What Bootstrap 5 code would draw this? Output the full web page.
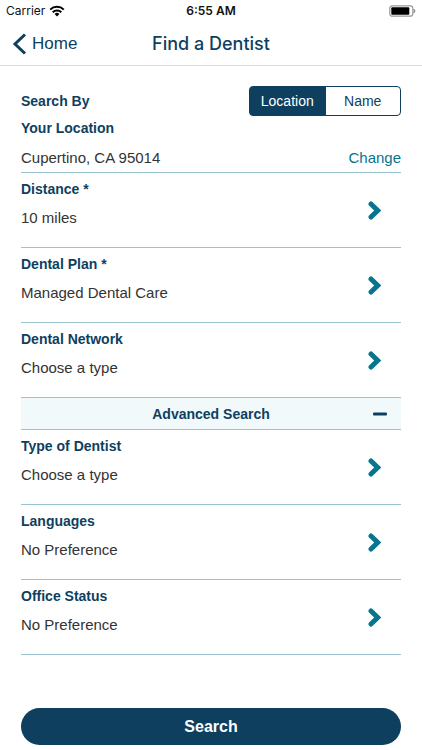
<!DOCTYPE html>
<html lang="en">
<head>
<meta charset="utf-8">
<meta name="viewport" content="width=device-width, initial-scale=1">
<title>Find a Dentist</title>
<link href="https://cdn.jsdelivr.net/npm/bootstrap@5.3.0/dist/css/bootstrap.min.css" rel="stylesheet">
<style>
  :root { --navy: #0e3f5f; --teal: #07758d; --rule: #9cc5d3; }
  body { font-family: "Liberation Sans", Arial, sans-serif; font-size: 15px; line-height: 20px; color: #333; background: #fff; }
  .status-bar { font-family: Inter, sans-serif; font-size: 12px; line-height: 22px; color: #111; padding: 0 6px; }
  .status-bar .clock { font-weight: 600; }
  .top-bar { height: 44px; padding: 0 12px; color: var(--navy); border-bottom: 1px solid #dcdcdc; }
  .top-bar a { color: var(--navy); font-size: 17px; line-height: 22px; }
  .top-bar h1 { font-family: Inter, sans-serif; font-size: 18px; font-weight: 500; line-height: 22px; }
  .page-main { padding: 20px 21px 5px; }
  .heading-text { font-size: 14px; font-weight: 700; color: var(--navy); }
  .location-title { padding: 2px 0 10px; }
  .segments { width: 40%; }
  .segments .btn { --bs-btn-color: var(--navy); --bs-btn-border-color: var(--navy); --bs-btn-active-bg: var(--navy); --bs-btn-active-border-color: var(--navy); --bs-btn-active-color: #fff; --bs-btn-border-radius: 4px; font-size: 14px; line-height: 20px; padding: 4px 0; width: 50%; }
  .ruled { border-bottom: 1px solid var(--rule); }
  .change-link { color: var(--teal); }
  .picker { min-height: 75px; padding: 6px 19px 0 0; color: #333; }
  .picker .heading-text { margin-bottom: 9px; }
  .picker svg { margin-top: 22px; }
  .section-toggle { background: #f2f9fb; padding: 6px 14px 5px; }
  .search-btn { background: var(--navy); color: #fff; font-size: 16px; font-weight: 700; line-height: 25px; }
  .search-btn:hover { background: #0a3049; color: #fff; }
</style>
<script src="https://cdn.jsdelivr.net/npm/bootstrap@5.3.0/dist/js/bootstrap.bundle.min.js" defer></script>
</head>
<body class="min-vh-100 d-flex flex-column">
<svg class="d-none" aria-hidden="true">
  <symbol id="chevron" viewBox="0 0 14 19"><path d="M3 3l6.700 6.500L3 16" fill="none" stroke="#07758d" stroke-width="5" stroke-linecap="round" stroke-linejoin="miter"/></symbol>
</svg>

<div class="status-bar row g-0 align-items-center">
  <div class="col d-flex align-items-center gap-1">
    <span>Carrier</span>
    <svg width="16" height="12" viewBox="0 0 16 12" aria-label="Wi-Fi"><g fill="none" stroke="#000" stroke-width="2"><path d="M1.200 4.600a9.700 9.700 0 0 1 13.600 0"/><path d="M3.700 7.300a6.200 6.200 0 0 1 8.600 0"/></g><path d="M5.600 9a3.500 3.500 0 0 1 4.800 0L8 11.500z"/></svg>
  </div>
  <div class="col-auto clock">6:55 AM</div>
  <div class="col d-flex justify-content-end">
    <svg width="27" height="12" viewBox="0 0 27 12" aria-label="Battery"><rect x=".8" y=".8" width="23" height="10.400" rx="2.500" fill="#fff" stroke="#999" stroke-width="1.200"/><rect x="2.300" y="2.300" width="18" height="7.400" rx="1"/><path d="M25 4v4q2-2 0-4" fill="#999" stroke="#999"/></svg>
  </div>
</div>

<header class="top-bar row g-0 align-items-center">
  <div class="col d-flex"><a href="#" class="d-flex align-items-center gap-1 text-decoration-none">
    <svg width="16" height="22" viewBox="0 0 16 22" aria-hidden="true"><path d="M13 1.500 3 11l10 9.500" fill="none" stroke="#0e3f5f" stroke-width="3"/></svg>
    <span>Home</span></a></div>
  <h1 class="col-auto m-0">Find a Dentist</h1>
  <div class="col"></div>
</header>

<main class="page-main d-flex flex-column flex-grow-1">
  <div class="d-flex justify-content-between align-items-center">
    <span class="heading-text" id="by">Search By</span>
    <div class="btn-group segments" role="group" aria-labelledby="by">
      <input type="radio" class="btn-check" name="by" id="byLocation" checked>
      <label class="btn" for="byLocation">Location</label>
      <input type="radio" class="btn-check" name="by" id="byName">
      <label class="btn" for="byName">Name</label>
    </div>
  </div>

  <div class="heading-text location-title">Your Location</div>
  <div class="ruled d-flex justify-content-between pb-1">
    <span>Cupertino, CA 95014</span>
    <a href="#" class="change-link text-decoration-none">Change</a>
  </div>

  <a href="#" class="picker ruled d-flex justify-content-between align-items-start text-decoration-none">
    <span class="d-flex flex-column"><span class="heading-text">Distance *</span><span>10 miles</span></span>
    <svg width="14" height="19" aria-hidden="true"><use href="#chevron"/></svg>
  </a>
  <a href="#" class="picker ruled d-flex justify-content-between align-items-start text-decoration-none">
    <span class="d-flex flex-column"><span class="heading-text">Dental Plan *</span><span>Managed Dental Care</span></span>
    <svg width="14" height="19" aria-hidden="true"><use href="#chevron"/></svg>
  </a>
  <a href="#" class="picker ruled d-flex justify-content-between align-items-start text-decoration-none">
    <span class="d-flex flex-column"><span class="heading-text">Dental Network</span><span>Choose a type</span></span>
    <svg width="14" height="19" aria-hidden="true"><use href="#chevron"/></svg>
  </a>

  <button type="button" class="section-toggle ruled heading-text border-top-0 border-start-0 border-end-0 row g-0 align-items-center" data-bs-toggle="collapse" data-bs-target="#advanced" aria-expanded="true" aria-controls="advanced">
    <span class="col"></span>
    <span class="col-auto">Advanced Search</span>
    <span class="col d-flex justify-content-end"><svg width="14" height="4" viewBox="0 0 14 4" aria-hidden="true"><rect y=".5" width="14" height="3" rx="1" fill="#0e3f5f"/></svg></span>
  </button>

  <div class="collapse show" id="advanced">
    <a href="#" class="picker ruled d-flex justify-content-between align-items-start text-decoration-none">
      <span class="d-flex flex-column"><span class="heading-text">Type of Dentist</span><span>Choose a type</span></span>
      <svg width="14" height="19" aria-hidden="true"><use href="#chevron"/></svg>
    </a>
    <a href="#" class="picker ruled d-flex justify-content-between align-items-start text-decoration-none">
      <span class="d-flex flex-column"><span class="heading-text">Languages</span><span>No Preference</span></span>
      <svg width="14" height="19" aria-hidden="true"><use href="#chevron"/></svg>
    </a>
    <a href="#" class="picker ruled d-flex justify-content-between align-items-start text-decoration-none">
      <span class="d-flex flex-column"><span class="heading-text">Office Status</span><span>No Preference</span></span>
      <svg width="14" height="19" aria-hidden="true"><use href="#chevron"/></svg>
    </a>
  </div>

  <button type="submit" class="btn search-btn rounded-pill border-0 w-100 mt-auto">Search</button>
</main>
</body>
</html>
